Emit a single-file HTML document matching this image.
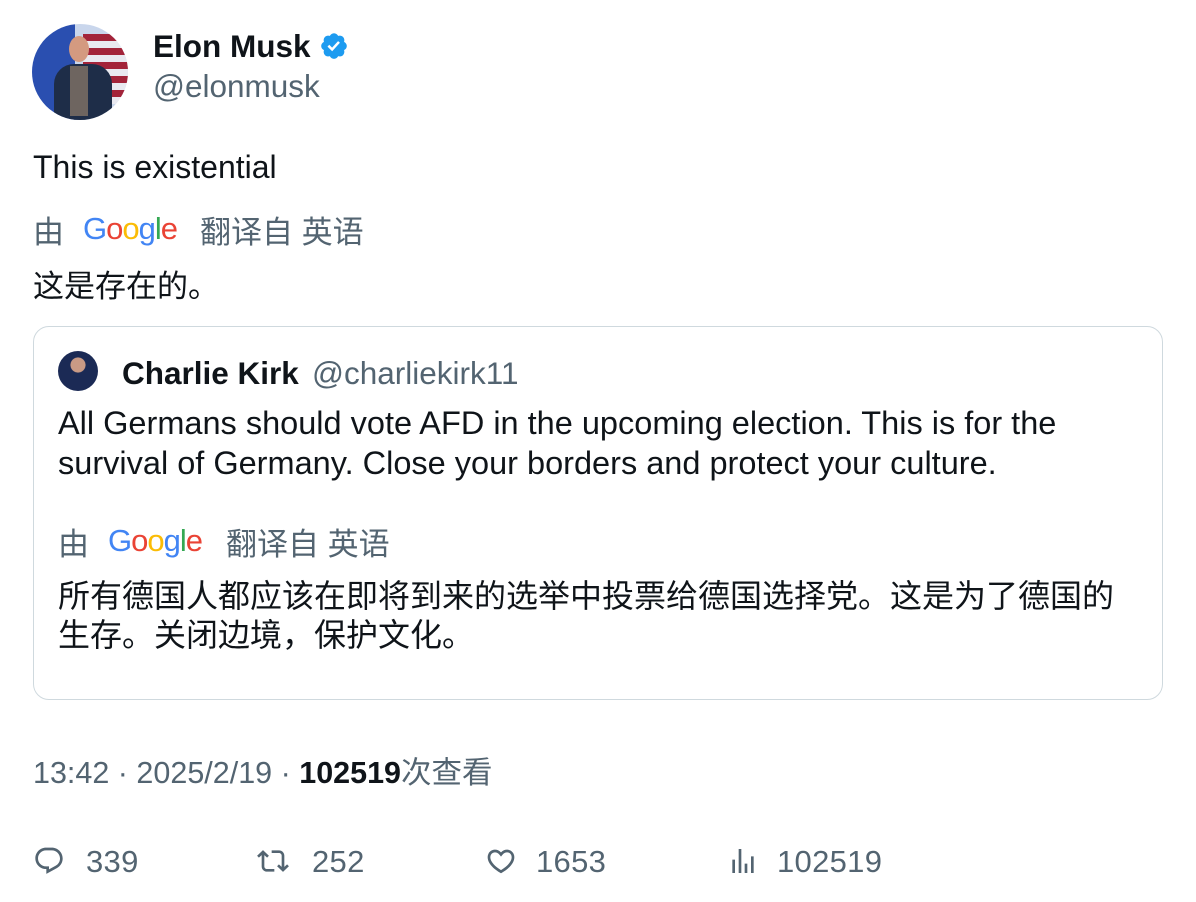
<!DOCTYPE html>
<html><head><meta charset="utf-8"><style>
body{margin:0;width:1196px;height:902px;background:#fff;font-family:"Liberation Sans","Noto Sans CJK SC",sans-serif;color:#0f1419;position:relative;overflow:hidden}
.a{position:absolute;white-space:nowrap;line-height:1}
.g{color:#536471}
.G{font-weight:500;letter-spacing:-1px}
</style></head><body>
<div class="a" style="left:32px;top:24px;width:96px;height:96px;border-radius:50%;overflow:hidden;background:linear-gradient(90deg,#2a4fb0 0 45%,#c9d6ec 45% 100%)">
 <div style="position:absolute;right:0;top:10px;width:45px;height:70px;background:repeating-linear-gradient(#a3243a 0 7px,#e9e9f0 7px 14px)"></div>
 <div style="position:absolute;left:22px;top:40px;width:58px;height:60px;border-radius:20px 20px 0 0;background:#1e2d48"></div>
 <div style="position:absolute;left:38px;top:42px;width:18px;height:50px;background:#6e6560"></div>
 <div style="position:absolute;left:37px;top:12px;width:20px;height:26px;border-radius:50%;background:#d49a80"></div>
</div>
<div class="a" style="left:153px;top:31px;font-size:31.5px;font-weight:bold">Elon Musk</div>
<svg class="a" style="left:319px;top:31px" width="30" height="30" viewBox="0 0 24 24"><path fill="#1d9bf0" d="M22.25 12c0-1.43-.88-2.670-2.190-3.340.46-1.390.2-2.900-.81-3.910s-2.520-1.270-3.910-.81c-.66-1.310-1.910-2.190-3.340-2.190s-2.670.88-3.330 2.190c-1.400-.46-2.910-.2-3.920.81s-1.260 2.520-.8 3.910C2.630 9.330 1.750 10.570 1.750 12s.88 2.670 2.200 3.340c-.46 1.390-.21 2.900.8 3.910s2.520 1.260 3.910.81c.67 1.310 1.910 2.190 3.340 2.190s2.680-.88 3.340-2.190c1.390.45 2.900.2 3.910-.81s1.270-2.520.81-3.910c1.310-.67 2.190-1.910 2.190-3.340z"/><path fill="#fff" d="M10.54 16.2l-3.74-3.74 1.41-1.42 2.26 2.26 4.8-5.23 1.47 1.36z"/></svg>
<div class="a g" style="left:153px;top:71px;font-size:31.5px">@elonmusk</div>
<div class="a" style="left:33px;top:151px;font-size:32px">This is existential</div>
<div class="a g" style="left:33px;top:217px;font-size:31px">由</div>
<div class="a G" style="left:83px;top:213px;font-size:31px"><span style="color:#4285f4">G</span><span style="color:#ea4335">o</span><span style="color:#fbbc05">o</span><span style="color:#4285f4">g</span><span style="color:#34a853">l</span><span style="color:#ea4335">e</span></div>
<div class="a g" style="left:200px;top:217px;font-size:31px">翻译自 英语</div>
<div class="a" style="left:33px;top:271px;font-size:31px">这是存在的。</div>
<div class="a" style="left:33px;top:326px;width:1128px;height:372px;border:1px solid #cfd9de;border-radius:16px"></div>
<div class="a" style="left:58px;top:351px;width:40px;height:40px;border-radius:50%;background:radial-gradient(circle at 50% 35%,#c99a85 0 22%,#1b2a55 24%)"></div>
<div class="a" style="left:122px;top:358px;font-size:31.5px;font-weight:bold">Charlie Kirk</div>
<div class="a g" style="left:312px;top:358px;font-size:31.5px">@charliekirk11</div>
<div class="a" style="left:58px;top:403px;font-size:32.5px;line-height:40px">All Germans should vote AFD in the upcoming election. This is for the<br>survival of Germany. Close your borders and protect your culture.</div>
<div class="a g" style="left:58px;top:529px;font-size:31px">由</div>
<div class="a G" style="left:108px;top:525px;font-size:31px"><span style="color:#4285f4">G</span><span style="color:#ea4335">o</span><span style="color:#fbbc05">o</span><span style="color:#4285f4">g</span><span style="color:#34a853">l</span><span style="color:#ea4335">e</span></div>
<div class="a g" style="left:226px;top:529px;font-size:31px">翻译自 英语</div>
<div class="a" style="left:58px;top:577px;font-size:32px;line-height:39px">所有德国人都应该在即将到来的选举中投票给德国选择党。这是为了德国的<br>生存。关闭边境，保护文化。</div>
<div class="a g" style="left:33px;top:758px;font-size:30.5px">13:42 · 2025/2/19 · <b style="color:#0f1419">102519</b>次查看</div>
<svg class="a" style="left:33px;top:845px" width="32" height="32" viewBox="0 0 24 24"><path fill="#536471" d="M1.751 10c0-4.420 3.584-8 8.005-8h4.366c4.490 0 8.129 3.640 8.129 8.130 0 2.960-1.607 5.680-4.196 7.110l-8.054 4.460v-3.690h-.067c-4.490.1-8.183-3.510-8.183-8.010zm8.005-6c-3.317 0-6.005 2.690-6.005 6 0 3.370 2.770 6.080 6.138 6.010l.351-.01h1.761v2.300l5.087-2.810c1.951-1.080 3.163-3.130 3.163-5.360 0-3.390-2.744-6.130-6.129-6.130H9.756z"/></svg>
<div class="a g" style="left:86px;top:846px;font-size:31px;letter-spacing:0.3px">339</div>
<svg class="a" style="left:257px;top:845px" width="32" height="32" viewBox="0 0 24 24"><path fill="#536471" d="M4.5 3.88l4.432 4.14-1.364 1.46L5.5 7.55V16c0 1.1.896 2 2 2H13v2H7.5c-2.209 0-4-1.790-4-4V7.55L1.432 9.48.068 8.02 4.5 3.88zM16.5 6H11V4h5.5c2.209 0 4 1.790 4 4v8.45l2.068-1.930 1.364 1.460-4.432 4.140-4.432-4.140 1.364-1.460 2.068 1.930V8c0-1.1-.896-2-2-2z"/></svg>
<div class="a g" style="left:312px;top:846px;font-size:31px;letter-spacing:0.3px">252</div>
<svg class="a" style="left:485px;top:845px" width="32" height="32" viewBox="0 0 24 24"><path fill="#536471" d="M16.697 5.5c-1.222-.06-2.679.51-3.890 2.160l-.805 1.090-.806-1.090C9.984 6.010 8.526 5.440 7.304 5.500c-1.243.07-2.349.78-2.910 1.910-.552 1.120-.633 2.780.479 4.820 1.074 1.970 3.257 4.270 7.129 6.610 3.870-2.340 6.052-4.640 7.126-6.610 1.111-2.040 1.030-3.700.477-4.820-.561-1.130-1.666-1.840-2.908-1.910zm4.187 7.690c-1.351 2.480-4.001 5.120-8.379 7.670l-.503.3-.504-.3c-4.379-2.550-7.029-5.190-8.382-7.670-1.360-2.500-1.410-4.860-.514-6.670.887-1.790 2.647-2.910 4.601-3.010 1.651-.09 3.368.56 4.798 2.010 1.429-1.450 3.146-2.100 4.796-2.010 1.954.1 3.714 1.220 4.601 3.010.896 1.810.846 4.170-.514 6.670z"/></svg>
<div class="a g" style="left:536px;top:846px;font-size:31px;letter-spacing:0.3px">1653</div>
<svg class="a" style="left:727px;top:845px" width="32" height="32" viewBox="0 0 24 24"><path fill="#536471" d="M8.75 21V3h2v18h-2zM18 21V8.5h2V21h-2zM4 21l.004-10h2L6 21H4zm9.248 0v-7h2v7h-2z"/></svg>
<div class="a g" style="left:777px;top:846px;font-size:31px;letter-spacing:0.3px">102519</div>
</body></html>
